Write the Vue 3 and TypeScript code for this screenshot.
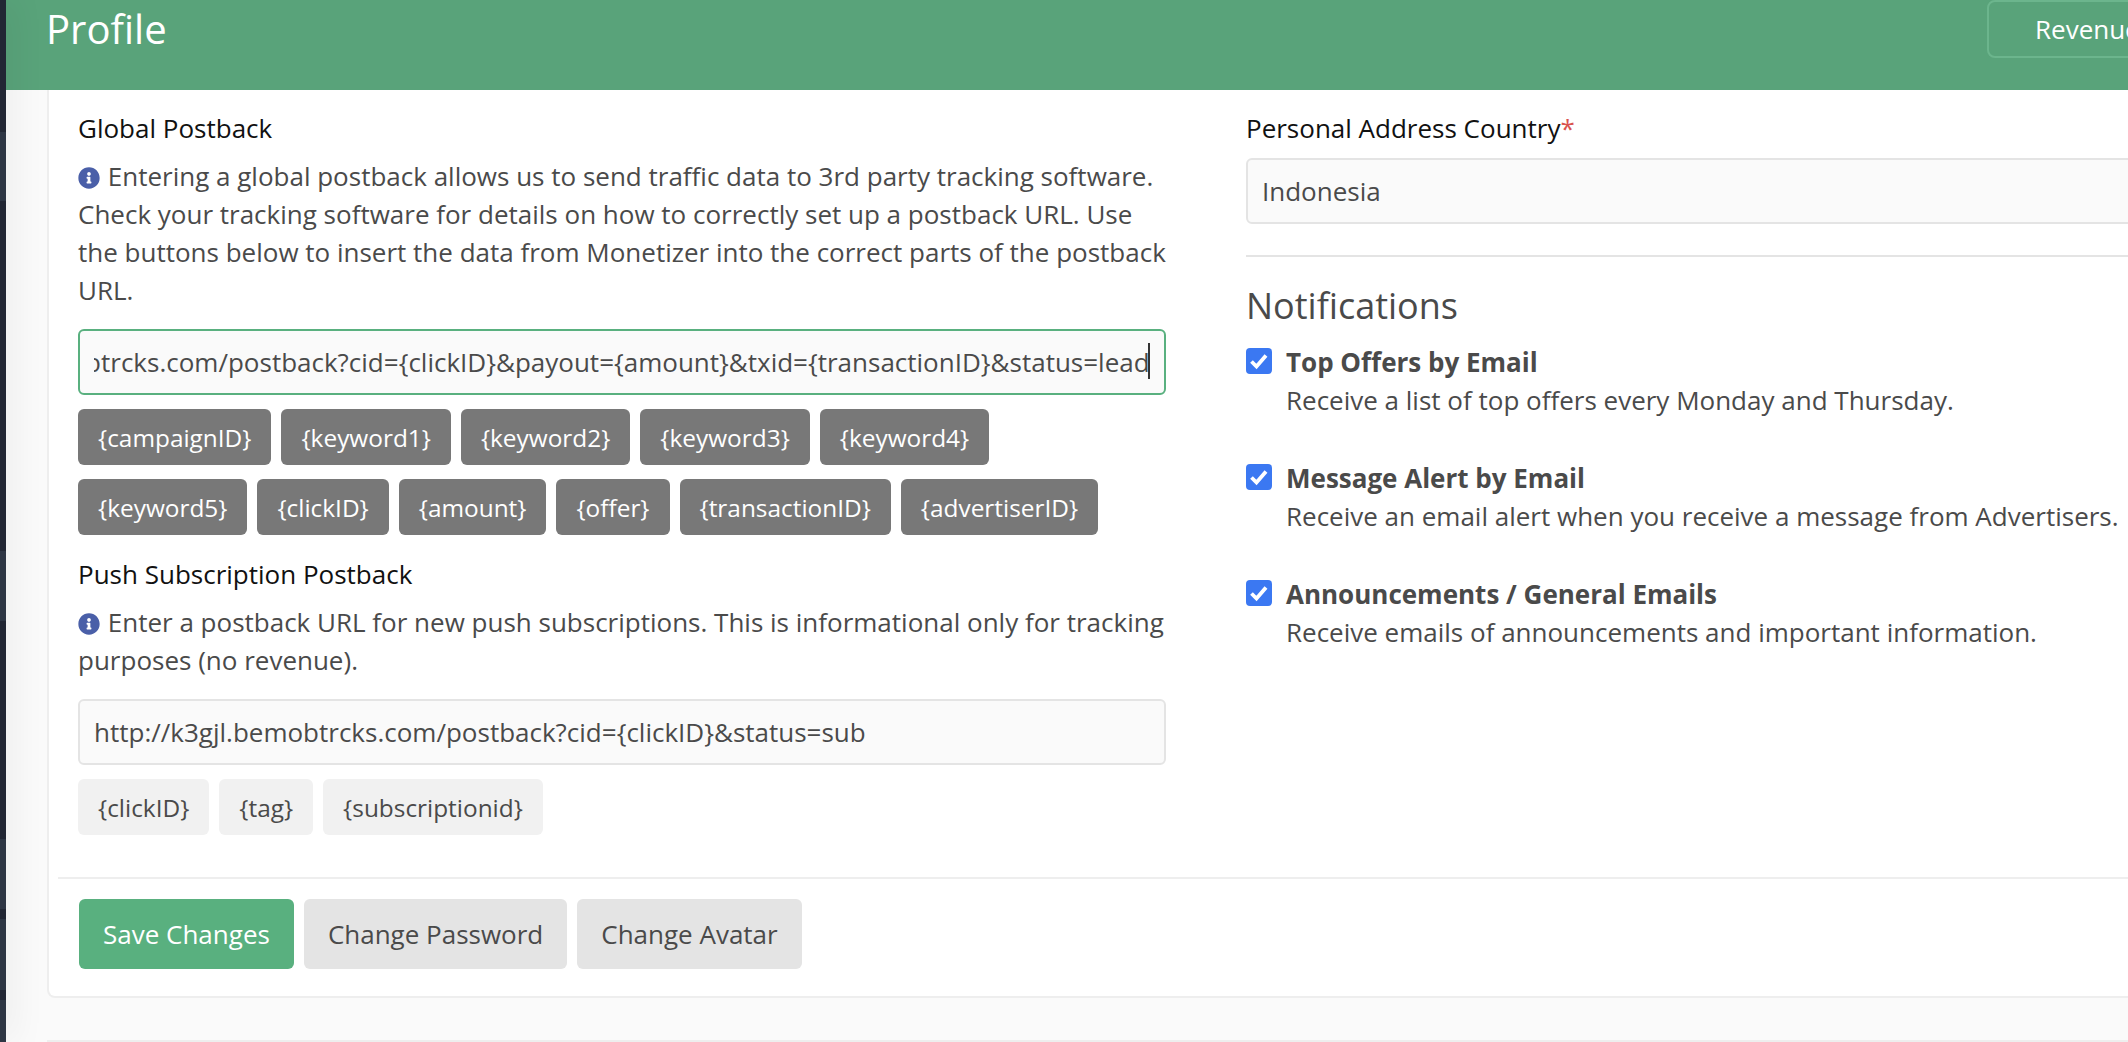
<template>
  <div class="page">
    <aside class="rail"></aside>
    <main class="main">
      <header class="topbar">
        <h1 class="title">Profile</h1>
        <a class="revenue-btn">Revenue</a>
      </header>
      <section class="card">
        <div class="columns">
          <div class="col">
            <label class="field-label">Global Postback</label>
            <p class="help">
              <svg class="info" viewBox="0 0 512 512"><path d="M256 8C119 8 8 119 8 256s111 248 248 248 248-111 248-248S393 8 256 8zm0 110c23 0 42 19 42 42s-19 42-42 42-42-19-42-42 19-42 42-42zm56 254c0 7-5 12-12 12h-88c-7 0-12-5-12-12v-24c0-7 5-12 12-12h12v-64h-12c-7 0-12-5-12-12v-24c0-7 5-12 12-12h64c7 0 12 5 12 12v100h12c7 0 12 5 12 12v24z" /></svg>
              Entering a global postback allows us to send traffic data to 3rd party tracking software. Check your tracking software for details on how to correctly set up a postback URL. Use the buttons below to insert the data from Monetizer into the correct parts of the postback URL.
            </p>
            <div class="input-wrap">
              <input ref="globalInput" class="text-input focused" :value="globalUrl" />
              <span class="caret"></span>
            </div>
            <div class="tags">
              <button v-for="tag in globalTags" :key="tag" class="tag dark">{{ tag }}</button>
            </div>
            <label class="field-label push-label">Push Subscription Postback</label>
            <p class="help">
              <svg class="info" viewBox="0 0 512 512"><path d="M256 8C119 8 8 119 8 256s111 248 248 248 248-111 248-248S393 8 256 8zm0 110c23 0 42 19 42 42s-19 42-42 42-42-19-42-42 19-42 42-42zm56 254c0 7-5 12-12 12h-88c-7 0-12-5-12-12v-24c0-7 5-12 12-12h12v-64h-12c-7 0-12-5-12-12v-24c0-7 5-12 12-12h64c7 0 12 5 12 12v100h12c7 0 12 5 12 12v24z" /></svg>
              Enter a postback URL for new push subscriptions. This is informational only for tracking purposes (no revenue).
            </p>
            <div class="input-wrap">
              <input class="text-input" :value="pushUrl" />
            </div>
            <div class="tags">
              <button v-for="tag in pushTags" :key="tag" class="tag light">{{ tag }}</button>
            </div>
          </div>
          <div class="col">
            <label class="field-label">Personal Address Country<span class="required">*</span></label>
            <input class="text-input country" value="Indonesia" />
            <hr class="rule" />
            <h2 class="section-title">Notifications</h2>
            <div v-for="item in notifications" :key="item.title" class="notify">
              <span class="check">
                <svg viewBox="0 0 26 26"><path d="M5.5 13.5l5 5 9.5-11" fill="none" stroke="#fff" stroke-width="3.8" /></svg>
              </span>
              <div>
                <div class="notify-title">{{ item.title }}</div>
                <div class="notify-text">{{ item.text }}</div>
              </div>
            </div>
          </div>
        </div>
        <footer class="card-footer">
          <button class="action save">Save Changes</button>
          <button class="action">Change Password</button>
          <button class="action">Change Avatar</button>
        </footer>
      </section>
      <div class="next-card"></div>
    </main>
  </div>
</template>

<script setup lang="ts">
import { onMounted, ref } from "vue";

const globalInput = ref<HTMLInputElement | null>(null);
const globalUrl =
  "http://k3gjl.bemobtrcks.com/postback?cid={clickID}&payout={amount}&txid={transactionID}&status=lead";
const pushUrl = "http://k3gjl.bemobtrcks.com/postback?cid={clickID}&status=sub";

const globalTags = [
  "{campaignID}",
  "{keyword1}",
  "{keyword2}",
  "{keyword3}",
  "{keyword4}",
  "{keyword5}",
  "{clickID}",
  "{amount}",
  "{offer}",
  "{transactionID}",
  "{advertiserID}",
];
const pushTags = ["{clickID}", "{tag}", "{subscriptionid}"];

const notifications = [
  { title: "Top Offers by Email", text: "Receive a list of top offers every Monday and Thursday." },
  { title: "Message Alert by Email", text: "Receive an email alert when you receive a message from Advertisers." },
  { title: "Announcements / General Emails", text: "Receive emails of announcements and important information." },
];

onMounted(() => {
  const el = globalInput.value;
  if (el) {
    el.scrollLeft = el.scrollWidth;
  }
});
</script>

<style scoped>
.page {
  display: flex;
  width: 2128px;
  height: 1042px;
  overflow: hidden;
  background: #fafafa;
  font-family: "Open Sans", sans-serif;
  font-size: 26px;
  line-height: 38px;
  color: #4a4a4a;
}

.rail {
  flex: 0 0 6px;
  position: relative;
  z-index: 2;
  background: linear-gradient(
    to bottom,
    #222734 0 132px,
    #2e3644 132px 201px,
    #222734 201px 551px,
    #2e3644 551px 621px,
    #222734 621px 839px,
    #2e3644 839px 909px,
    #222734 909px 919px,
    #2e3644 919px 990px,
    #222734 990px 1000px,
    #2e3644 1000px
  );
  box-shadow: 0 0 34px rgba(0, 0, 0, 0.22);
}

.main {
  flex: 1;
  min-width: 0;
}

.topbar {
  display: flex;
  justify-content: space-between;
  height: 90px;
  padding-left: 40px;
  background: #59a37a;
  overflow: hidden;
}

.title {
  margin: 5px 0 0;
  font-size: 40px;
  line-height: 48px;
  font-weight: 400;
  color: #ffffff;
}

.revenue-btn {
  box-sizing: border-box;
  flex: 0 0 220px;
  height: 58px;
  margin-right: -79px;
  padding: 8px 0 0 46px;
  border: 2px solid #6cb58d;
  border-radius: 8px;
  color: #ffffff;
}

.card {
  box-sizing: border-box;
  width: 2200px;
  height: 908px;
  margin-left: 41px;
  background: #ffffff;
  border: 2px solid #eeeeee;
  border-top: 0;
  border-radius: 0 0 8px 8px;
}

.columns {
  box-sizing: border-box;
  display: grid;
  grid-template-columns: 1088px 1088px;
  column-gap: 80px;
  height: 787px;
  padding: 19px 0 0 29px;
}

.field-label {
  display: block;
  color: #111111;
}

.required {
  color: #d9534f;
}

.help {
  margin: 10px 0 0;
}

.info {
  width: 22px;
  height: 22px;
  margin-right: 1px;
  vertical-align: -3px;
  fill: #4a5fa8;
}

.input-wrap {
  position: relative;
  margin-top: 20px;
}

.caret {
  position: absolute;
  top: 14px;
  right: 16px;
  width: 2px;
  height: 36px;
  background: #333333;
}

.text-input {
  box-sizing: border-box;
  display: block;
  width: 100%;
  height: 66px;
  padding: 0 14px;
  background: #fafafa;
  border: 2px solid #e4e4e4;
  border-radius: 6px;
  outline: none;
  font: inherit;
  color: #4a4a4a;
}

.text-input.focused {
  border-color: #59b07f;
}

.text-input.country {
  margin-top: 11px;
}

.tags {
  display: flex;
  flex-wrap: wrap;
  margin-top: 14px;
}

.tag {
  height: 56px;
  margin: 0 10px 14px 0;
  padding: 0 20px;
  border: 0;
  border-radius: 6px;
  font-family: inherit;
  font-size: 24.4px;
}

.tag.dark {
  background: #787878;
  color: #ffffff;
}

.tag.light {
  background: #f1f1f1;
  color: #4a4a4a;
}

.push-label {
  margin-top: 6px;
}

.rule {
  margin: 31px 0 0;
  border: 0;
  border-top: 2px solid #e4e4e4;
}

.section-title {
  margin: 27px 0 15px;
  font-size: 36px;
  line-height: 44px;
  font-weight: 400;
  color: #4a4a4a;
}

.notify {
  display: flex;
  gap: 14px;
  height: 116px;
}

.check {
  flex: 0 0 26px;
  height: 26px;
  margin-top: 5px;
  border-radius: 4px;
  background: #3b78f2;
}

.check svg {
  display: block;
}

.notify-title {
  font-weight: 700;
}

.card-footer {
  display: flex;
  gap: 10px;
  margin: 0 0 0 9px;
  padding: 20px 0 0 21px;
  border-top: 2px solid #eeeeee;
}

.action {
  height: 70px;
  padding: 0 24px;
  border: 0;
  border-radius: 6px;
  background: #e4e4e4;
  font: inherit;
  color: #4a4a4a;
}

.action.save {
  background: #59b07f;
  color: #ffffff;
}

.next-card {
  width: 2200px;
  height: 2px;
  margin: 42px 0 0 41px;
  background: #eeeeee;
}
</style>
